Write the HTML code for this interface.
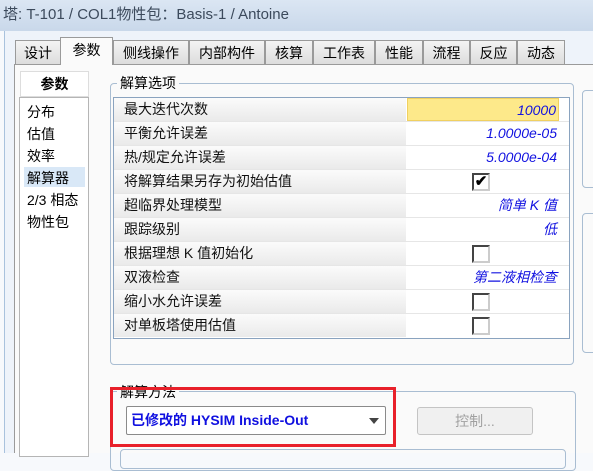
<!DOCTYPE html>
<html><head><meta charset="utf-8"><style>
*{box-sizing:border-box;margin:0;padding:0}
body{width:593px;height:453px;overflow:hidden;position:relative;background:#f7f9fc;font-family:"Liberation Sans","Noto Sans CJK SC",sans-serif;font-size:13px;color:#000}
.a{position:absolute}
#title{left:0;top:0;width:593px;height:31px;background:linear-gradient(#dbe6f3,#c9d8ea);color:#3c4a5c;font-size:15px;line-height:30px;padding-left:3px}
#frame{left:4px;top:31px;width:589px;height:422px;border-left:1px solid #a9c2dd;background:#eef3fa}
.tab{top:40px;height:25px;border:1px solid #9a9a9a;border-bottom:none;background:linear-gradient(#f4f4f4,#dcdcdc);text-align:center;line-height:24px;font-size:14px}
.tab.sel{top:37px;height:28px;background:#fafafa;z-index:2}
#panel{left:14px;top:64px;width:579px;height:389px;background:#fafafa;border-left:1px solid #9a9a9a;border-top:1px solid #9a9a9a}
.grp{border:1px solid #a9bdd2;border-radius:4px}
.lbl{background:#fafafa;padding:0 3px;font-size:14px}
.row{left:114px;width:455px;height:24px;border-bottom:1px solid #e6e6e6}
.nm{position:absolute;left:0;top:0;width:292px;height:23px;background:linear-gradient(#fbfbfb,#eaeaea);padding-left:10px;line-height:23px;font-size:14px;color:#111}
.vl{position:absolute;left:293px;top:0;width:152px;height:23px;background:#fff;text-align:right;padding-right:2px;line-height:23px;color:#1212e0;font-style:italic;font-size:14px}
.cb{position:absolute;left:358px;top:3px;width:18px;height:18px;border:2px solid #444;border-right-color:#ccc;border-bottom-color:#ccc;background:#fff}
</style></head><body>
<div id="title" class="a">塔: T-101 / COL1物性包：Basis-1 / Antoine</div>
<div id="frame" class="a"></div>
<div class="a tab" style="left:15px;width:46px">设计</div>
<div class="a tab sel" style="left:60px;width:53px">参数</div>
<div class="a tab" style="left:113px;width:76px">侧线操作</div>
<div class="a tab" style="left:189px;width:76px">内部构件</div>
<div class="a tab" style="left:265px;width:48px">核算</div>
<div class="a tab" style="left:313px;width:62px">工作表</div>
<div class="a tab" style="left:375px;width:48px">性能</div>
<div class="a tab" style="left:423px;width:47px">流程</div>
<div class="a tab" style="left:470px;width:47px">反应</div>
<div class="a tab" style="left:517px;width:48px">动态</div>
<div id="panel" class="a"></div>
<div class="a" style="left:20px;top:71px;width:69px;height:26px;border:1px solid #ddd;background:#fff;text-align:center;line-height:25px;font-weight:bold;font-size:14px">参数</div>
<div class="a" style="left:19px;top:97px;width:70px;height:360px;border:1px solid #b5b5b5;background:#fff"></div>
<div class="a" style="left:24px;top:167px;width:61px;height:20px;background:#d9e8f7"></div>
<div class="a" style="left:27px;top:101px;font-size:14px;line-height:22px">分布<br>估值<br>效率<br>解算器<br>2/3 相态<br>物性包</div>
<div class="a grp" style="left:110px;top:83px;width:464px;height:282px"></div>
<div class="a lbl" style="left:117px;top:73px">解算选项</div>
<div class="a" style="left:113px;top:97px;width:457px;height:242px;border:1px solid #8aa3bf;background:#fff"></div>
<div class="a row" style="top:98px"><div class="nm">最大迭代次数</div><div class="vl" style="background:#fde98a;border:1px solid #f0d060">10000</div></div>
<div class="a row" style="top:122px"><div class="nm">平衡允许误差</div><div class="vl">1.0000e-05</div></div>
<div class="a row" style="top:146px"><div class="nm">热/规定允许误差</div><div class="vl">5.0000e-04</div></div>
<div class="a row" style="top:170px"><div class="nm">将解算结果另存为初始估值</div><div class="vl"></div><div class="cb" style="font-style:normal;font-size:15px;line-height:13px;text-align:center;font-weight:bold">✔</div></div>
<div class="a row" style="top:194px"><div class="nm">超临界处理模型</div><div class="vl">简单 K 值</div></div>
<div class="a row" style="top:218px"><div class="nm">跟踪级别</div><div class="vl">低</div></div>
<div class="a row" style="top:242px"><div class="nm">根据理想 K 值初始化</div><div class="vl"></div><div class="cb"></div></div>
<div class="a row" style="top:266px"><div class="nm">双液检查</div><div class="vl">第二液相检查</div></div>
<div class="a row" style="top:290px"><div class="nm">缩小水允许误差</div><div class="vl"></div><div class="cb"></div></div>
<div class="a row" style="top:314px;border-bottom:none"><div class="nm">对单板塔使用估值</div><div class="vl"></div><div class="cb"></div></div>
<div class="a grp" style="left:582px;top:90px;width:20px;height:98px"></div>
<div class="a grp" style="left:582px;top:213px;width:20px;height:140px"></div>
<div class="a grp" style="left:110px;top:391px;width:466px;height:80px"></div>
<div class="a lbl" style="left:117px;top:382px">解算方法</div>
<div class="a grp" style="left:120px;top:449px;width:446px;height:20px"></div>
<div class="a" style="left:110px;top:387px;width:286px;height:60px;border:3px solid #e8202a"></div>
<div class="a" style="left:126px;top:406px;width:260px;height:29px;border:1px solid #8a8a8a;border-radius:2px;background:#fff;color:#1010e0;font-weight:bold;font-size:14px;line-height:27px;padding-left:4px">已修改的 HYSIM Inside-Out<span style="position:absolute;right:6px;top:11px;width:0;height:0;border-left:5px solid transparent;border-right:5px solid transparent;border-top:6px solid #444"></span></div>
<div class="a" style="left:417px;top:407px;width:116px;height:28px;border:1px solid #c4c4c4;border-radius:3px;background:#f0f0f0;color:#a0a0a0;text-align:center;line-height:26px;font-size:14px">控制...</div>
</body></html>
